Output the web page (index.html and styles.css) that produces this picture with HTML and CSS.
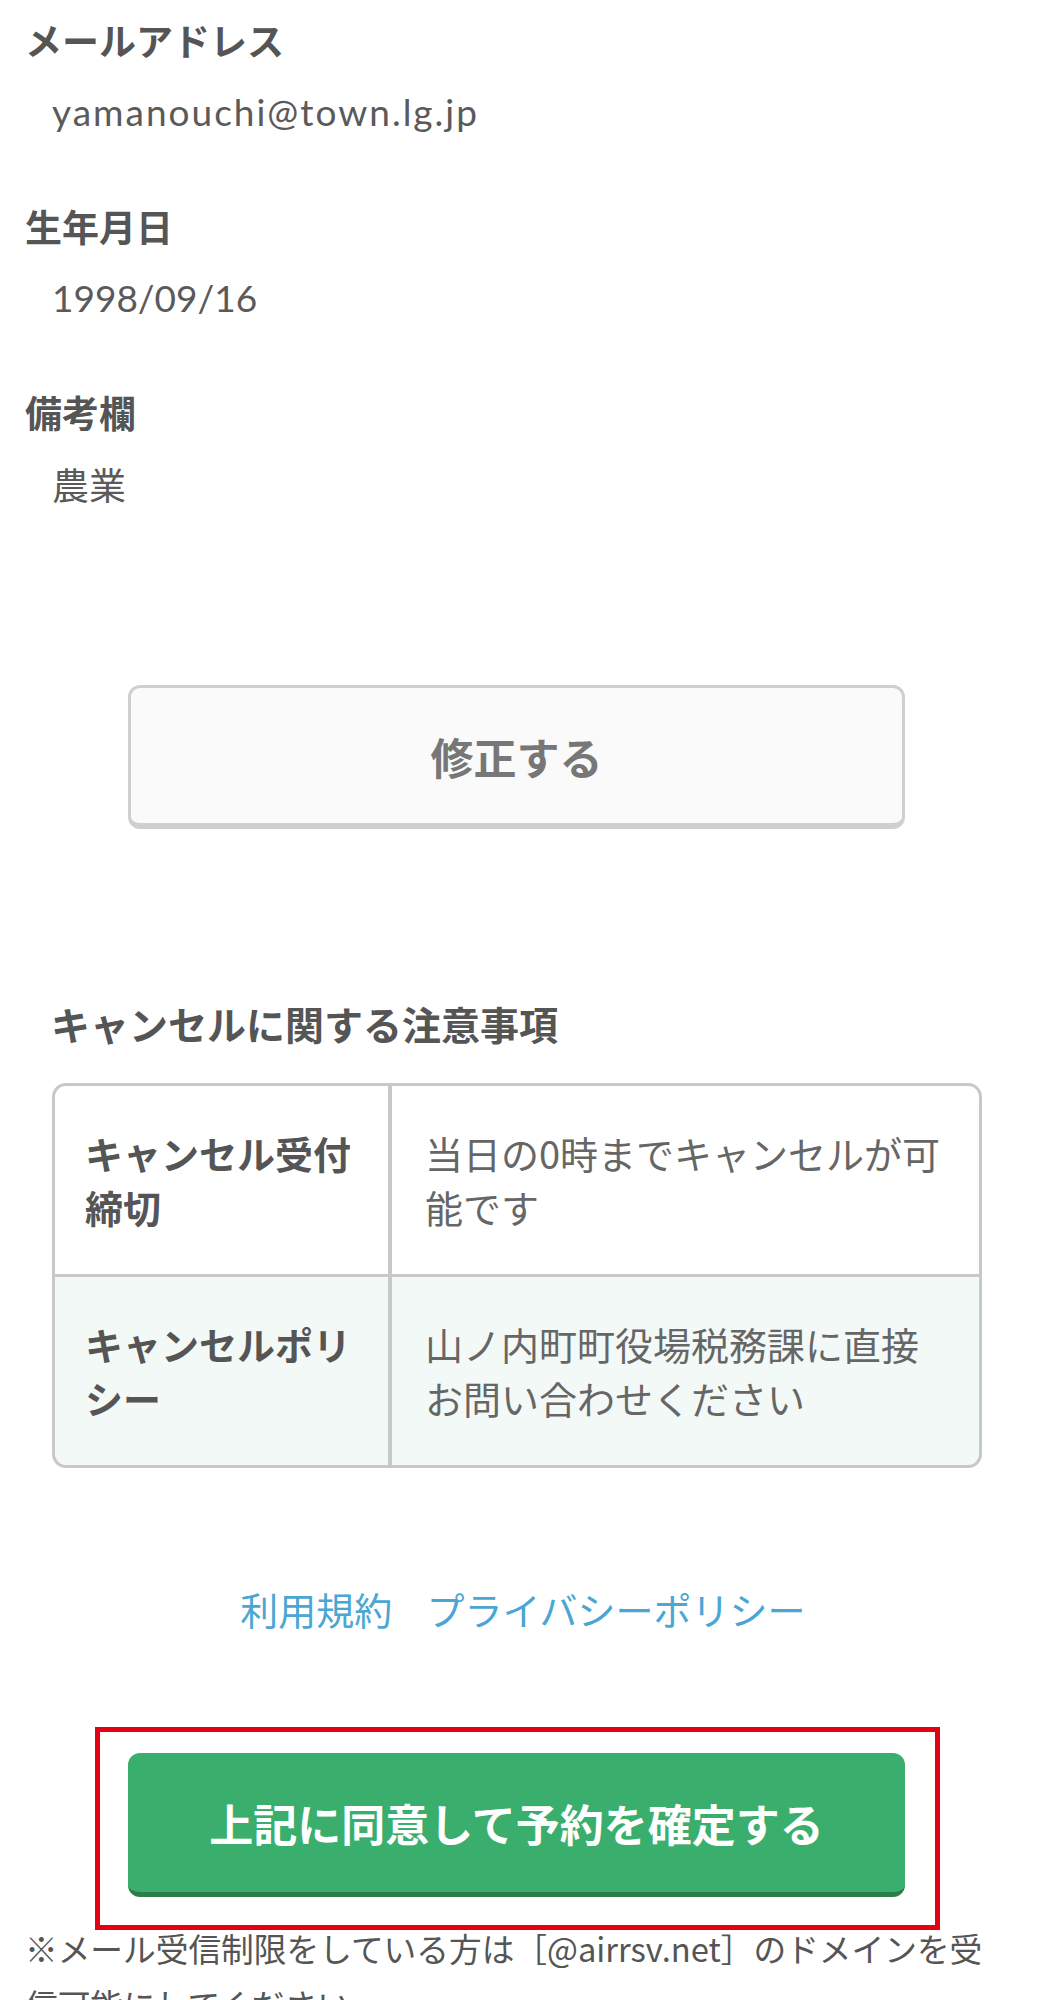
FILE: index.html
```html
<!DOCTYPE html>
<html lang="ja">
<head>
    <meta charset="utf-8">
    <title>予約内容の確認</title>
    <link rel="stylesheet" href="styles.css">
</head>
<body>
    <div id="page">
        <div class="field">
            <p class="field-label">メールアドレス</p>
            <p class="field-value latin">yamanouchi@town.lg.jp</p>
        </div>
        <div class="field">
            <p class="field-label">生年月日</p>
            <p class="field-value latin digits">1998/09/16</p>
        </div>
        <div class="field">
            <p class="field-label">備考欄</p>
            <p class="field-value">農業</p>
        </div>

        <button class="button button-edit">修正する</button>

        <h2 id="cancel-title">キャンセルに関する注意事項</h2>
        <div id="cancel-table">
            <div class="cell cell-head">キャンセル受付締切</div>
            <div class="cell">当日の0時までキャンセルが可能です</div>
            <div class="cell cell-head alt">キャンセルポリシー</div>
            <div class="cell alt">山ノ内町町役場税務課に直接お問い合わせください</div>
        </div>

        <div id="links">
            <a href="#">利用規約</a>
            <a href="#">プライバシーポリシー</a>
        </div>

        <div id="confirm-box">
            <button class="button button-confirm">上記に同意して予約を確定する</button>
        </div>

        <p id="note">※メール受信制限をしている方は［@airrsv.net］のドメインを受信可能にしてください</p>
    </div>
</body>
</html>
```

FILE: styles.css
```css
body {
    margin: 0;
    padding: 0;
    background-color: #fff;
    color: #555;
    font-family: "Noto Sans CJK JP", sans-serif;
}

#page {
    width: 1038px;
    padding-top: 15px;
    padding-bottom: 200px;
}

p {
    margin: 0;
}

.field {
    padding-left: 25px;
    margin-bottom: 64px;
}

.field-label {
    font-size: 37px;
    font-weight: bold;
    line-height: 50px;
    color: #555;
}

.field-value {
    margin-top: 22px;
    padding-left: 27px;
    font-size: 37px;
    line-height: 50px;
    color: #5a5a5a;
}

.latin {
    font-family: Lato, "Noto Sans CJK JP", sans-serif;
    letter-spacing: 2px;
}

.digits {
    letter-spacing: 0;
}

.button {
    display: block;
    width: 777px;
    height: 144px;
    margin-left: 128px;
    border-radius: 12px;
    font-family: "Noto Sans CJK JP", sans-serif;
    font-size: 43px;
    font-weight: bold;
    cursor: pointer;
}

.button-edit {
    margin-top: 176px;
    background-color: #fafafa;
    color: #777;
    border: 3px solid #cfcfcf;
    border-bottom-width: 6px;
}

#cancel-title {
    margin: 169px 0 35px 51px;
    font-size: 39px;
    font-weight: bold;
    line-height: 50px;
    color: #555;
}

#cancel-table {
    display: grid;
    grid-template-columns: 333px 1fr;
    column-gap: 4px;
    row-gap: 3px;
    width: 924px;
    margin-left: 52px;
    background-color: #c8c8c8;
    border: 3px solid #c8c8c8;
    border-radius: 14px;
    overflow: hidden;
}

.cell {
    background-color: #fff;
    padding: 40px 33px;
    font-size: 38px;
    line-height: 54px;
    color: #666;
    display: flex;
    align-items: center;
}

.cell-head {
    padding-left: 30px;
    padding-right: 30px;
    font-weight: bold;
    color: #555;
}

.cell.alt {
    background-color: #f3f9f6;
}

#links {
    display: flex;
    justify-content: center;
    gap: 34px;
    margin-top: 116px;
    padding-left: 8px;
    font-size: 38px;
    line-height: 50px;
}

#links a {
    color: #4ba6d3;
    text-decoration: none;
}

#confirm-box {
    width: 785px;
    margin: 93px 0 0 95px;
    padding: 21px 25px 28px 25px;
    border: 5px solid #e50012;
}

.button-confirm {
    margin-left: 3px;
    background-color: #3aae6c;
    color: #fff;
    font-size: 44px;
    border: none;
    border-bottom: 5px solid #2e7b4c;
}

#note {
    margin-top: -10px;
    padding: 0 30px 0 25px;
    font-size: 32.7px;
    line-height: 56px;
    color: #555;
}
```
